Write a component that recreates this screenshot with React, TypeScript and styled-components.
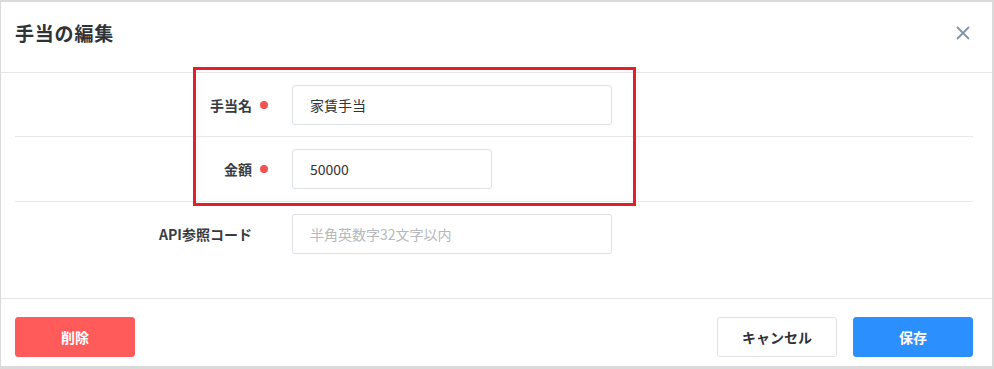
import * as React from "react";
import styled, { createGlobalStyle } from "styled-components";

const GlobalStyle = createGlobalStyle`
  html, body {
    margin: 0;
    padding: 0;
    background: #ffffff;
  }
  body {
    font-family: "Noto Sans CJK JP", "Noto Sans", "Liberation Sans", sans-serif;
    color: #333333;
  }
  * {
    box-sizing: border-box;
  }
`;

const Modal = styled("div")`
  width: 994px;
  height: 369px;
  border-style: solid;
  border-color: #dadada;
  border-width: 2px 2px 3px 1px;
  background: #ffffff;
  display: flex;
  flex-direction: column;
`;

const Header = styled("div")`
  height: 71px;
  flex-shrink: 0;
  display: flex;
  align-items: flex-start;
  justify-content: space-between;
  padding: 16px 22px 0 14px;
  border-bottom: 1px solid #e6e6e6;
`;

const Title = styled("h2")`
  margin: 0;
  font-size: 19px;
  line-height: 30px;
  font-weight: 700;
  color: #2f3337;
  letter-spacing: 0.8px;
`;

const CloseButton = styled("button")`
  border: none;
  background: none;
  padding: 0;
  margin-top: 8px;
  width: 14px;
  height: 14px;
  display: flex;
  cursor: pointer;
`;

const Body = styled("div")`
  position: relative;
  padding: 0 19px 32px 14px;
  border-bottom: 1px solid #e6e6e6;
`;

const Row = styled("div")<{ $height: number; $last?: boolean }>`
  height: ${(p) => p.$height}px;
  display: flex;
  align-items: center;
  border-bottom: ${(p) => (p.$last ? "none" : "1px solid #e8e8e8")};
`;

const Label = styled("label")`
  width: 237px;
  text-align: right;
  font-size: 14px;
  font-weight: 700;
  color: #383c40;
`;

const DotSlot = styled("div")`
  width: 40px;
  display: flex;
  align-items: center;
`;

const RequiredDot = styled("span")`
  width: 8px;
  height: 8px;
  margin-left: 8px;
  border-radius: 50%;
  background: #f55353;
`;

const Input = styled("input")<{ $width: number }>`
  width: ${(p) => p.$width}px;
  height: 40px;
  border: 1px solid #dfe3e8;
  border-radius: 3px;
  padding: 0 17px;
  font-family: inherit;
  font-size: 14px;
  color: #333333;
  outline: none;

  &::placeholder {
    color: #b5b8bc;
  }
`;

const Highlight = styled("div")`
  position: absolute;
  left: 192px;
  top: -6px;
  width: 443px;
  height: 139px;
  border: 3px solid #e51e2b;
  pointer-events: none;
`;

const Footer = styled("div")`
  flex: 1;
  display: flex;
  align-items: flex-start;
  padding: 18px 19px 0 14px;
  gap: 16px;
`;

const Spacer = styled("div")`
  flex: 1;
`;

const Button = styled("button")<{ $variant: "danger" | "primary" | "plain" }>`
  width: 120px;
  height: 40px;
  border-radius: 3px;
  font-family: inherit;
  font-size: 14px;
  font-weight: 700;
  cursor: pointer;
  border: 1px solid
    ${(p) =>
      p.$variant === "danger"
        ? "#ff5b5b"
        : p.$variant === "primary"
        ? "#2b8ffe"
        : "#dfe3e8"};
  background: ${(p) =>
    p.$variant === "danger"
      ? "#ff5b5b"
      : p.$variant === "primary"
      ? "#2b8ffe"
      : "#ffffff"};
  color: ${(p) => (p.$variant === "plain" ? "#2f3337" : "#ffffff")};
`;

function App(): JSX.Element {
  return (
    <>
      <GlobalStyle />
      <Modal>
        <Header>
          <Title>手当の編集</Title>
          <CloseButton aria-label="close">
            <svg width="14" height="14" viewBox="0 0 14 14">
              <path
                d="M1.5 1.5 L12.5 12.5 M12.5 1.5 L1.5 12.5"
                stroke="#8393a7"
                strokeWidth="1.8"
                strokeLinecap="round"
              />
            </svg>
          </CloseButton>
        </Header>
        <Body>
          <Row $height={64}>
            <Label>手当名</Label>
            <DotSlot>
              <RequiredDot />
            </DotSlot>
            <Input $width={320} defaultValue="家賃手当" />
          </Row>
          <Row $height={65}>
            <Label>金額</Label>
            <DotSlot>
              <RequiredDot />
            </DotSlot>
            <Input $width={200} defaultValue="50000" />
          </Row>
          <Row $height={64} $last>
            <Label>API参照コード</Label>
            <DotSlot />
            <Input $width={320} placeholder="半角英数字32文字以内" />
          </Row>
          <Highlight />
        </Body>
        <Footer>
          <Button $variant="danger">削除</Button>
          <Spacer />
          <Button $variant="plain">キャンセル</Button>
          <Button $variant="primary">保存</Button>
        </Footer>
      </Modal>
    </>
  );
}

export default App;
